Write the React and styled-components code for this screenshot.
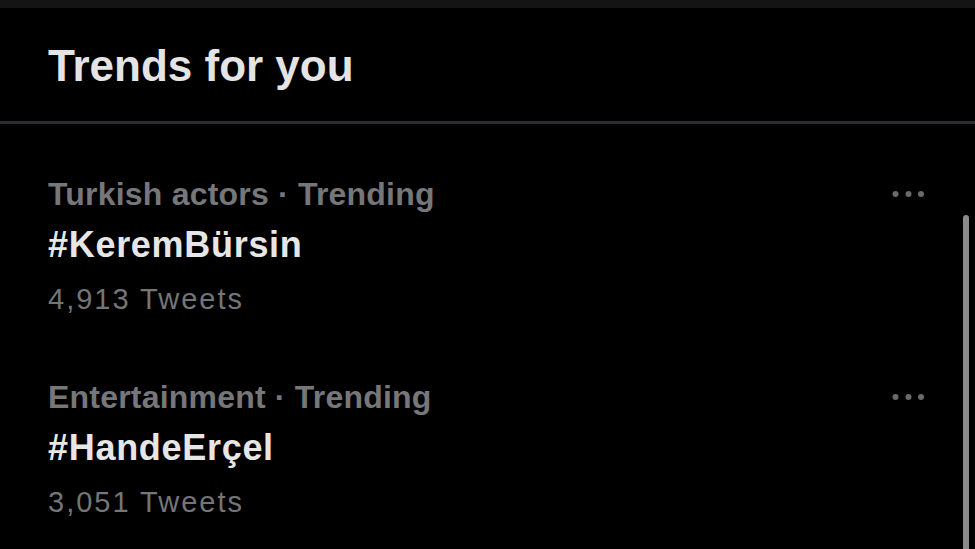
import React from 'react'
import styled, { createGlobalStyle } from 'styled-components'

const GlobalStyle = createGlobalStyle`
  html, body {
    margin: 0;
    padding: 0;
    height: 100%;
    background: #000;
  }
  #root {
    height: 100%;
  }
`;

const Page = styled.div`
  height: 100vh;
  overflow: hidden;
  display: flex;
  flex-direction: column;
  background: #000;
  font-family: "Liberation Sans", Arial, sans-serif;
`;

const TopBand = styled.div`
  height: 8px;
  background: #141414;
  flex-shrink: 0;
`;

const Header = styled.div`
  height: 116px;
  flex-shrink: 0;
  display: flex;
  align-items: center;
  padding: 2px 0 0 48px;
  box-sizing: border-box;
  border-bottom: 3px solid #2b2d2f;
`;

const Title = styled.h2`
  margin: 0;
  font-size: 44px;
  line-height: 1;
  font-weight: 700;
  color: #e4e4e4;
`;

const Body = styled.div`
  flex: 1;
  display: flex;
  min-height: 0;
`;

const List = styled.div`
  flex: 1;
  display: flex;
  flex-direction: column;
  gap: 62px;
  padding: 52px 39px 0 48px;
`;

const Track = styled.div`
  width: 12px;
  display: flex;
  flex-direction: column;
`;

const Thumb = styled.div`
  width: 6px;
  flex: 1;
  margin-top: 91px;
  background: #8a8a8a;
  border-radius: 3px 3px 0 0;
`;

const Trend = styled.div`
  display: flex;
  flex-direction: column;
`;

const TopLine = styled.div`
  display: flex;
  align-items: center;
  justify-content: space-between;
`;

const Category = styled.div`
  font-size: 32px;
  line-height: 36px;
  font-weight: 700;
  letter-spacing: 0.2px;
  color: #76777a;
`;

const Tag = styled.div`
  margin-top: 11px;
  font-size: 36px;
  line-height: 44px;
  font-weight: 700;
  letter-spacing: 0.7px;
  color: #e6e6e6;
`;

const Count = styled.div`
  margin-top: 14px;
  font-size: 29px;
  line-height: 36px;
  letter-spacing: 2px;
  color: #747578;
`;

const More = () => (
  <svg width="32" height="8" viewBox="0 0 32 8">
    <circle cx="3.5" cy="4" r="3" fill="#696a6c" />
    <circle cx="16.5" cy="4" r="3" fill="#696a6c" />
    <circle cx="29" cy="4" r="3" fill="#696a6c" />
  </svg>
);

const trends = [
  { category: 'Turkish actors · Trending', tag: '#KeremBürsin', count: '4,913 Tweets' },
  { category: 'Entertainment · Trending', tag: '#HandeErçel', count: '3,051 Tweets' },
];

export default function App() {
  return (
    <Page>
      <GlobalStyle />
      <TopBand />
      <Header>
        <Title>Trends for you</Title>
      </Header>
      <Body>
        <List>
          {trends.map((t) => (
            <Trend key={t.tag}>
              <TopLine>
                <Category>{t.category}</Category>
                <More />
              </TopLine>
              <Tag>{t.tag}</Tag>
              <Count>{t.count}</Count>
            </Trend>
          ))}
        </List>
        <Track>
          <Thumb />
        </Track>
      </Body>
    </Page>
  )
}
